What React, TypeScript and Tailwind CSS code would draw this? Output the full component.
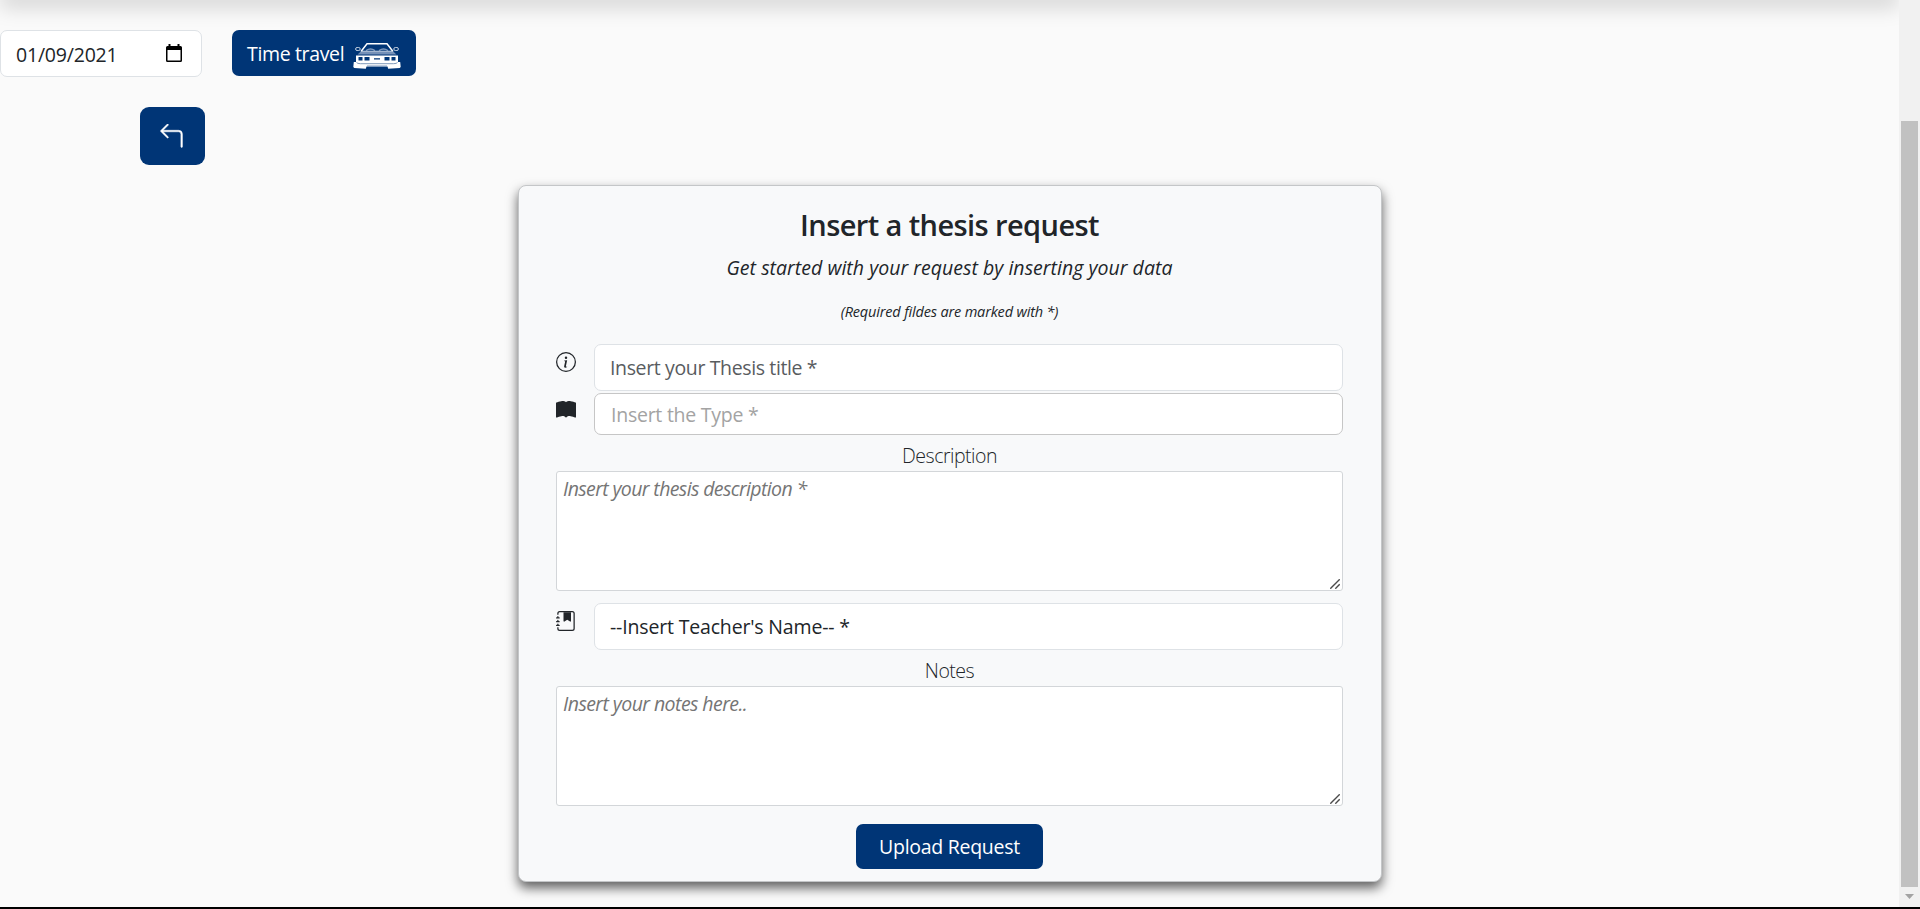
import React from "react";
import { BsArrow90DegLeft, BsBookFill, BsInfoCircle, BsJournalBookmarkFill } from "react-icons/bs";

function CarIcon() {
  return (
    <svg className="mt-[6px]" width="48" height="28" viewBox="0 0 48 28" fill="none" stroke="#fff">
      <path d="M8 9.500 14 1.800h20l6 7.700" strokeWidth="1.500" />
      <path d="M13 8.500q4.500-3 9 0M26 8.500q4.500-3 9 0" stroke="#7f99bd" strokeWidth="1.300" />
      <rect x="2.600" y="5.500" width="4.600" height="3" rx="1.500" stroke="#c3d0e1" strokeWidth="1" />
      <rect x="40.800" y="5.500" width="4.600" height="3" rx="1.500" stroke="#c3d0e1" strokeWidth="1" />
      <path d="M8 9.200h32l3.500 3.300H4.500Z" fill="#7590b7" stroke="none" />
      <path d="M8 9.200h32" stroke="#dfe7f1" strokeWidth="0.800" />
      <path d="M3 13.500h42v6.500H3z" fill="#fff" stroke="none" />
      <path d="M5.500 15h4v3.500h-4zM11.500 15h5v3.500h-5zM31.500 15h5v3.500h-5zM38.500 15h4v3.500h-4zM21 16.200h6v1.200h-6z" fill="#003576" stroke="none" />
      <path d="M.8 20h46.400l.5 5-1 1-11.500.7-.7-2.200h-21l-.7 2.200-11.500-.7-1-1Z" fill="#fff" stroke="none" />
      <path d="M3.500 20.500q1 1.200 4 1.200h33q3 0 4-1.200" stroke="#5f7fa8" strokeWidth="0.800" />
      <path d="M14 24h20" stroke="#7f99bd" strokeWidth="1" />
    </svg>
  );
}

function CalendarIcon() {
  return (
    <svg width="16" height="19" viewBox="0 0 16 19" fill="#000">
      <path d="M2.500 0h2v2h7V0h2v2h1A1.500 1.500 0 0 1 16 3.500v13a1.500 1.500 0 0 1-1.500 1.500h-13A1.500 1.500 0 0 1 0 16.500v-13A1.500 1.500 0 0 1 1.500 2h1ZM1.500 6v10.500h13V6Z" />
    </svg>
  );
}

type AreaProps = { placeholder: string; spacing: string };

function NotesArea({ placeholder, spacing }: AreaProps) {
  return (
    <div className="relative h-[120px]">
      <textarea
        placeholder={placeholder}
        className={`block h-full w-full resize-none rounded-[3px] border border-[#d3d6d9] bg-white px-[6px] py-[3px] text-[19.5px] leading-[27px] italic outline-none placeholder:text-[#757575] ${spacing}`}
      />
      <svg className="absolute right-[3px] bottom-[2px]" width="10" height="10" viewBox="0 0 10 10" stroke="#4a4a4a" strokeWidth="1.400">
        <path d="M.3 9.700 9.700.3M5.300 9.700 9.700 5.300" />
      </svg>
    </div>
  );
}

export default function App() {
  return (
    <div className="flex h-[909px] flex-col overflow-hidden bg-[#fafafa] font-['Open_Sans','Noto_Sans',sans-serif] text-[19.5px] text-[#212529]">
      <div className="flex h-[907px]">
        <main className="relative w-[1899px] overflow-hidden">
          <div className="absolute -top-5 left-0 h-5 w-full shadow-[0_8px_20px_rgba(0,0,0,0.15)]" />

          <div className="flex gap-[30px] pt-[30px]">
            <div className="flex h-[47px] w-[202px] items-center justify-between rounded-[7px] border border-[#dee2e6] bg-white pr-[19px] pl-[15px]">
              <span className="pt-[2px] tracking-[-0.200px]">01/09/2021</span>
              <CalendarIcon />
            </div>
            <button className="flex h-[46px] w-[184px] items-center gap-[9px] rounded-[7px] bg-[#003576] pl-[15px] whitespace-nowrap text-white">
              <span className="pt-[2px] tracking-[-0.350px]">Time travel</span>
              <CarIcon />
            </button>
          </div>

          <button className="mt-[30px] ml-[140px] flex h-[58px] w-[65px] items-start justify-center rounded-[9px] bg-[#003576] pt-[17px] pr-[2px] text-white">
            <BsArrow90DegLeft size={25} strokeWidth={0.3} />
          </button>

          <section className="mt-[20px] ml-[518px] h-[697px] w-[864px] rounded-[8px] border border-[#c4c6c8] bg-[#f8f9fa] pt-[21px] pr-[38px] pl-[37px] shadow-[0_6px_12px_rgba(0,0,0,0.62)]">
            <h3 className="text-center text-[29px] leading-[36px] font-semibold tracking-[-0.590px]">Insert a thesis request</h3>
            <p className="mt-[13px] text-center leading-[24px] tracking-[0.030px] italic">Get started with your request by inserting your data</p>
            <p className="mt-[22px] text-center text-[14.5px] leading-[20px] tracking-[-0.170px] italic">(Required fildes are marked with *)</p>

            <div className="mt-[22px] flex">
              <BsInfoCircle size={20} className="mt-[8px] mr-[18px]" />
              <input placeholder="Insert your Thesis title *" className="h-[47px] flex-1 rounded-[7px] border border-[#dee2e6] bg-white px-[15px] tracking-[-0.370px] outline-none placeholder:text-[#595c5f]" />
            </div>
            <div className="mt-[2px] flex">
              <BsBookFill size={20} className="mt-[7px] mr-[18px]" />
              <input placeholder="Insert the Type *" className="h-[42px] flex-1 rounded-[7px] border border-[#c6c6c6] bg-white px-[16px] tracking-[-0.250px] outline-none placeholder:text-[#a3a3a3]" />
            </div>

            <label className="mt-[9px] block text-center leading-[24px] font-light tracking-[-0.500px]">Description</label>
            <div className="mt-[3px]">
              <NotesArea placeholder="Insert your thesis description *" spacing="tracking-[-0.620px]" />
            </div>

            <div className="mt-[12px] flex">
              <BsJournalBookmarkFill size={20} className="mt-[8px] mr-[18px]" />
              <div className="flex h-[47px] flex-1 items-center rounded-[7px] border border-[#dee2e6] bg-white px-[15px] tracking-[-0.170px]">--Insert Teacher's Name-- *</div>
            </div>

            <label className="mt-[9px] block text-center leading-[24px] font-light tracking-[-0.500px]">Notes</label>
            <div className="mt-[3px]">
              <NotesArea placeholder="Insert your notes here.." spacing="tracking-[-0.570px]" />
            </div>

            <div className="mt-[18px] flex justify-center">
              <button className="h-[45px] w-[187px] rounded-[7px] bg-[#003576] tracking-[-0.280px] whitespace-nowrap text-white">Upload Request</button>
            </div>
          </section>
        </main>

        <aside className="flex w-[21px] flex-col items-center bg-[#f1f1f1] pt-[121px]">
          <div className="h-[766px] w-[17px] shrink-0 bg-[#c1c1c1]" />
          <svg className="mt-[7px] shrink-0" width="9" height="5" viewBox="0 0 9 5" fill="#a3a3a3">
            <path d="M0 0h9L4.500 5Z" />
          </svg>
        </aside>
      </div>
      <div className="h-[2px] bg-black" />
    </div>
  );
}
